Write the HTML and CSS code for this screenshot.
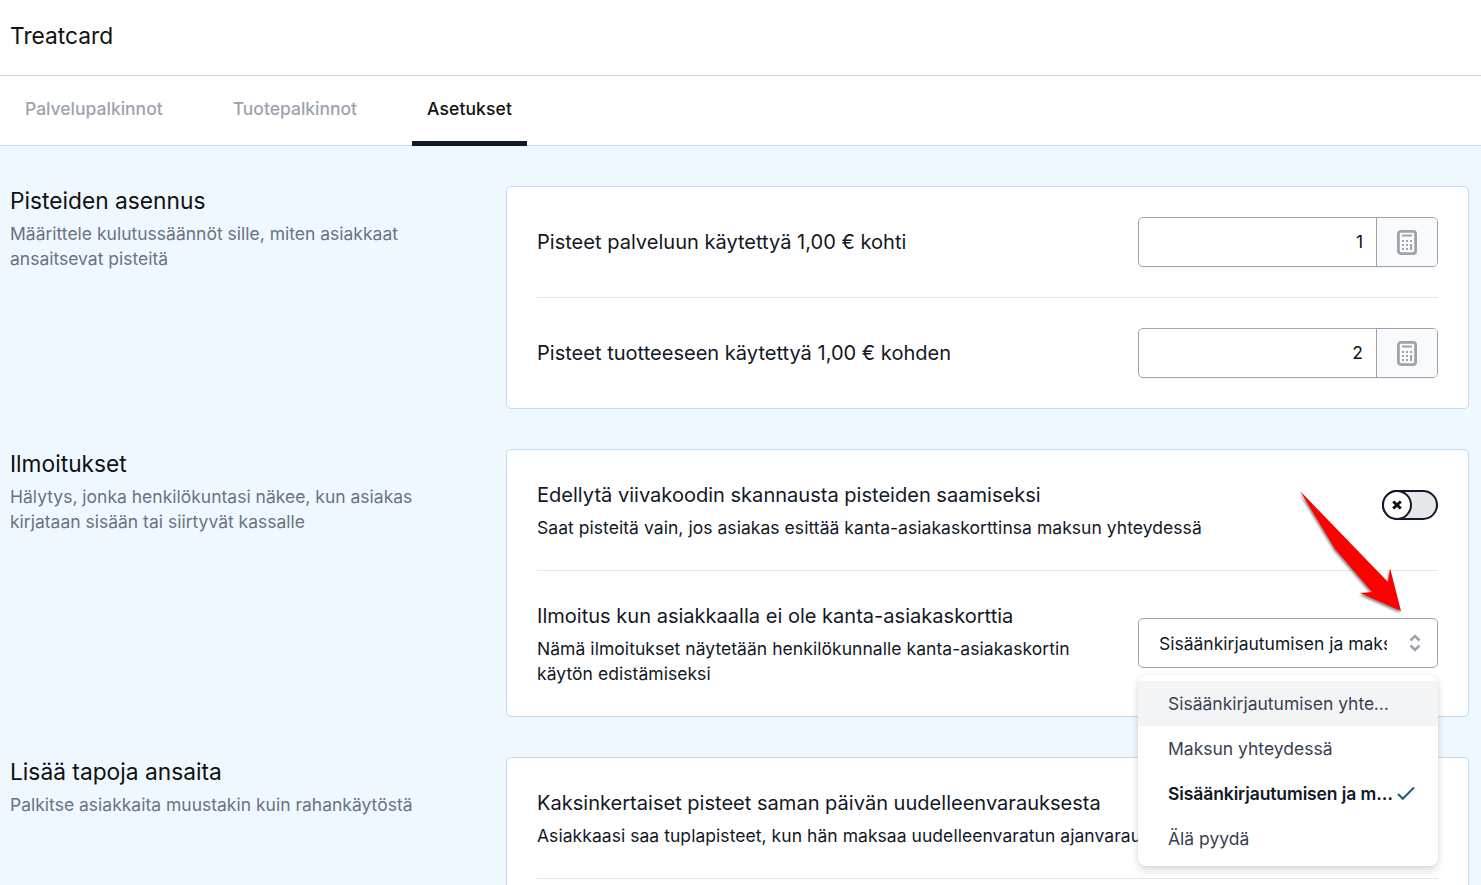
FILE: index.html
```html
<!DOCTYPE html>
<html lang="fi">
<head>
<meta charset="utf-8">
<title>Treatcard</title>
<link rel="stylesheet" href="styles.css">
</head>
<body>
<svg width="0" height="0" class="defs">
  <symbol id="calc" viewBox="0 0 20 25">
    <rect x="1.4" y="1.4" width="17.2" height="22.2" rx="2.5" fill="none" stroke="currentColor" stroke-width="2.8"/>
    <rect x="5" y="4.5" width="10" height="2" fill="currentColor"/>
    <g fill="currentColor">
      <rect x="5" y="10" width="2" height="2"/><rect x="9" y="10" width="2" height="2"/><rect x="13" y="10" width="2" height="2"/>
      <rect x="5" y="14" width="2" height="2"/><rect x="9" y="14" width="2" height="2"/><rect x="13" y="14" width="2" height="6"/>
      <rect x="5" y="18" width="2" height="2"/><rect x="9" y="18" width="2" height="2"/>
    </g>
  </symbol>
  <symbol id="xmark" viewBox="0 0 10 10">
    <path d="M1.2 1.5l7.600 7M8.800 1.500l-7.600 7" fill="none" stroke="currentColor" stroke-width="3"/>
  </symbol>
</svg>
<header class="topbar"><h1 class="brand">Treatcard</h1></header>
<nav class="tabs">
  <a class="tab">Palvelupalkinnot</a>
  <a class="tab">Tuotepalkinnot</a>
  <a class="tab tab-active">Asetukset</a>
</nav>
<main class="main">
  <section class="section">
    <div class="intro">
      <h2 class="intro-title">Pisteiden asennus</h2>
      <p class="intro-text">Määrittele kulutussäännöt sille, miten asiakkaat ansaitsevat pisteitä</p>
    </div>
    <div class="card">
      <div class="row">
        <div class="row-title">Pisteet palveluun käytettyä 1,00 € kohti</div>
        <div class="field">
          <div class="field-value">1</div>
          <div class="field-addon"><svg class="calc-icon"><use href="#calc"/></svg></div>
        </div>
      </div>
      <div class="row">
        <div class="row-title">Pisteet tuotteeseen käytettyä 1,00 € kohden</div>
        <div class="field">
          <div class="field-value">2</div>
          <div class="field-addon"><svg class="calc-icon"><use href="#calc"/></svg></div>
        </div>
      </div>
    </div>
  </section>
  <section class="section">
    <div class="intro">
      <h2 class="intro-title">Ilmoitukset</h2>
      <p class="intro-text">Hälytys, jonka henkilökuntasi näkee, kun asiakas kirjataan sisään tai siirtyvät kassalle</p>
    </div>
    <div class="card">
      <div class="row row-top">
        <div class="row-body">
          <div class="row-title">Edellytä viivakoodin skannausta pisteiden saamiseksi</div>
          <div class="row-text">Saat pisteitä vain, jos asiakas esittää kanta-asiakaskorttinsa maksun yhteydessä</div>
        </div>
        <div class="toggle"><span class="knob"><svg class="x-icon"><use href="#xmark"/></svg></span></div>
      </div>
      <div class="row">
        <div class="row-body row-body-narrow">
          <div class="row-title">Ilmoitus kun asiakkaalla ei ole kanta-asiakaskorttia</div>
          <div class="row-text">Nämä ilmoitukset näytetään henkilökunnalle kanta-asiakaskortin käytön edistämiseksi</div>
        </div>
        <div class="select">
          <span class="select-value">Sisäänkirjautumisen ja maksun yhteydessä</span>
          <svg class="select-icon" viewBox="0 0 12 20"><path d="M1.5 7.500L6 3 10.500 7.500M1.500 12.500L6 17 10.500 12.500" fill="none" stroke="currentColor" stroke-width="2.600"/></svg>
          <ul class="menu">
            <li class="menu-item menu-item-hover"><span class="menu-label">Sisäänkirjautumisen yhteydessä</span></li>
            <li class="menu-item"><span class="menu-label">Maksun yhteydessä</span></li>
            <li class="menu-item menu-item-selected"><span class="menu-label">Sisäänkirjautumisen ja maksun yhteydessä</span>
              <svg class="check-icon" viewBox="0 0 18 14"><path d="M1 8l4.800 4.800L17 1.500" fill="none" stroke="currentColor" stroke-width="2"/></svg></li>
            <li class="menu-item"><span class="menu-label">Älä pyydä</span></li>
          </ul>
        </div>
      </div>
    </div>
  </section>
  <section class="section">
    <div class="intro">
      <h2 class="intro-title">Lisää tapoja ansaita</h2>
      <p class="intro-text">Palkitse asiakkaita muustakin kuin rahankäytöstä</p>
    </div>
    <div class="card">
      <div class="row row-top">
        <div class="row-body">
          <div class="row-title">Kaksinkertaiset pisteet saman päivän uudelleenvarauksesta</div>
          <div class="row-text">Asiakkaasi saa tuplapisteet, kun hän maksaa uudelleenvaratun ajanvarauksen</div>
        </div>
        <div class="toggle"><span class="knob"><svg class="x-icon"><use href="#xmark"/></svg></span></div>
      </div>
      <div class="row">
        <div class="row-body">
          <div class="row-title">Pisteet syntymäpäivänä</div>
        </div>
      </div>
    </div>
  </section>
</main>
<svg class="annotation" viewBox="0 0 130 140" aria-hidden="true">
  <path d="M10 10L98 101 100 87 111 130 70 112 82 111 45 68z" class="arrow"/>
</svg>
</body>
</html>
```
FILE: styles.css
```css
* { box-sizing: border-box; }
html, body { margin: 0; height: 885px; overflow: hidden; }
body {
  font-family: Inter, "Liberation Sans", sans-serif;
  color: #111827;
  background: #eff8ff;
  position: relative;
}
.defs { position: absolute; }
.topbar {
  height: 76px;
  background: #fff;
  border-bottom: 1px solid #d1d5db;
  padding: 0 10px 4px;
  display: flex;
  align-items: center;
}
.brand { margin: 0; font-size: 22.75px; font-weight: 400; line-height: 30px; color: #111; }
.tabs {
  height: 70px;
  background: #fff;
  border-bottom: 1px solid #bfdbfe;
  display: flex;
  gap: 40px;
  padding-left: 10px;
}
.tab {
  padding: 0 15px;
  height: 70px;
  line-height: 65px;
  font-size: 17.5px;
  font-weight: 500;
  color: #9ca3af;
}
.tab-active { color: #111; border-bottom: 5px solid #111827; letter-spacing: .1px; }
.main { padding: 40px 12px 0 10px; display: flex; flex-direction: column; gap: 40px; }
.section { display: flex; }
.intro { width: 496px; flex: none; padding-right: 80px; }
.intro-title { margin: 0; font-size: 22.75px; line-height: 30px; font-weight: 400; color: #111; }
.intro-text { margin: 5px 0 0; font-size: 17.5px; line-height: 25px; color: #6b7280; }
.card {
  flex: 1;
  background: #fff;
  border: 1px solid #bfdbfe;
  border-radius: 5px;
  padding: 0 30px;
}
.row {
  display: flex;
  align-items: center;
  justify-content: space-between;
  padding: 30px 0;
  border-top: 1px solid #e5e7eb;
}
.row:first-child { border-top: 0; }
.row-top { align-items: flex-start; }
.row-title { font-size: 20.06px; line-height: 30px; color: #111827; }
.row-text { margin-top: 5px; font-size: 17.5px; line-height: 25px; color: #111827; letter-spacing: .05px; }
.row-body-narrow { width: 560px; }
.field {
  width: 300px;
  height: 50px;
  display: flex;
  border: 1px solid #9ca3af;
  border-radius: 5px;
  overflow: hidden;
  box-shadow: 0 1px 2px rgba(0, 0, 0, .05);
}
.field-value {
  flex: 1;
  padding-right: 13px;
  text-align: right;
  font-size: 17.5px;
  line-height: 47px;
  color: #111;
}
.field-addon {
  width: 61px;
  background: #f9fafb;
  border-left: 1px solid #9ca3af;
  display: flex;
  align-items: center;
  justify-content: center;
  color: #9ca3af;
}
.calc-icon { width: 20px; height: 25px; }
.toggle {
  width: 56px;
  height: 30px;
  margin-top: 10px;
  border: 2.500px solid #111827;
  border-radius: 15px;
  background: #e5e7eb;
  flex: none;
}
.knob {
  display: flex;
  width: 30px;
  height: 30px;
  margin: -2.500px;
  border: 2.500px solid #111827;
  border-radius: 50%;
  background: #fff;
  align-items: center;
  justify-content: center;
  color: #111;
}
.x-icon { width: 10px; height: 10px; }
.select {
  position: relative;
  width: 300px;
  height: 50px;
  flex: none;
  margin-bottom: 1px;
  border: 1px solid #9ca3af;
  border-radius: 5px;
  background: #fff;
  padding: 2px 50px 0 20px;
  display: flex;
  align-items: center;
}
.select-value { font-size: 17.5px; line-height: 46px; white-space: nowrap; overflow: hidden; color: #111827; }
.select-icon { position: absolute; right: 16px; top: 14px; width: 12px; height: 20px; color: #9ca3af; }
.menu {
  position: absolute;
  z-index: 5;
  top: 56px;
  left: -1px;
  width: 300px;
  margin: 0;
  padding: 6px 0 5px;
  list-style: none;
  background: #fff;
  border-radius: 8px;
  box-shadow: 0 4px 8px rgba(0, 0, 0, .15), 0 0 2px rgba(0, 0, 0, .08);
}
.menu-item {
  position: relative;
  height: 45px;
  padding: 0 46px 0 30px;
  display: flex;
  align-items: center;
  font-size: 17.5px;
  color: #374151;
}
.menu-item-hover { background: #f3f4f6; }
.menu-item-selected { font-weight: 600; color: #111827; padding-right: 45px; }
.menu-item-selected .menu-label { letter-spacing: -.1px; }
.menu-label { white-space: nowrap; overflow: hidden; text-overflow: ellipsis; }
.check-icon { position: absolute; right: 23px; top: 15px; width: 18px; height: 14px; color: #155e75; }
.annotation {
  position: absolute;
  left: 1290px;
  top: 481px;
  width: 130px;
  height: 140px;
  z-index: 10;
}
.arrow { fill: #f00; filter: drop-shadow(-1px 2px 1px rgba(0, 0, 0, .45)); }
```
